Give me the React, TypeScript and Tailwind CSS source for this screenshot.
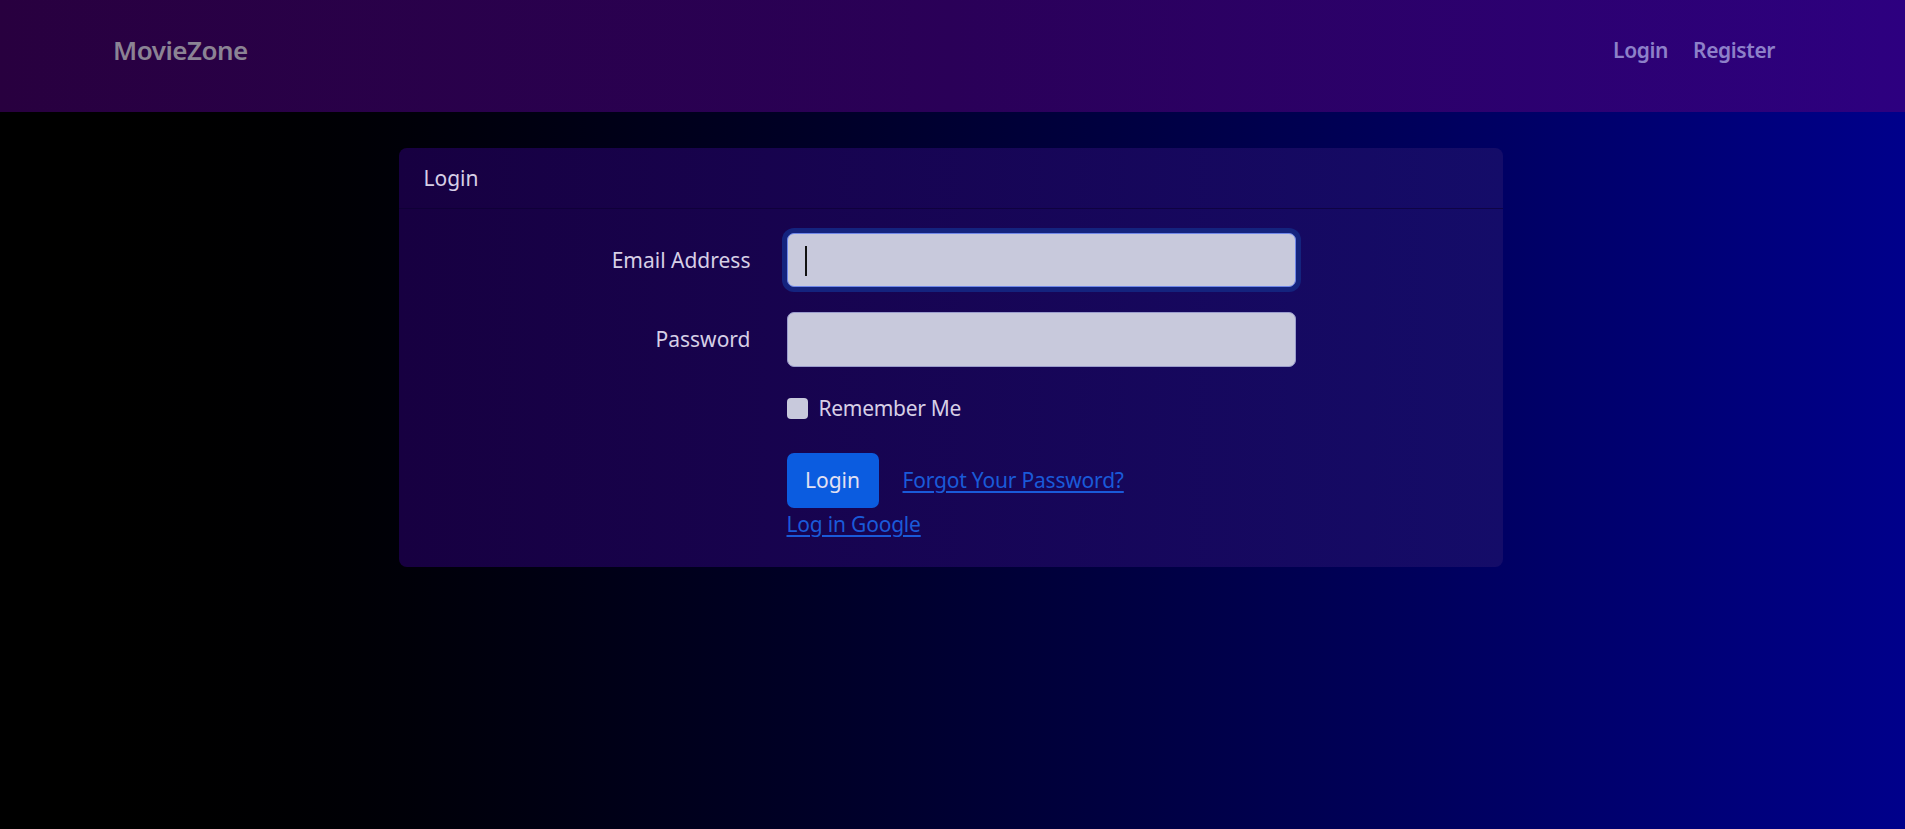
import React from "react";

export default function App() {
  return (
    <div
      className="min-h-[829px] w-full bg-gradient-to-r from-black to-[#00008b] text-[#d6cfe6]"
      style={{ fontFamily: '"Noto Sans", "Open Sans", sans-serif' }}
    >
      <nav className="flex h-[112px] items-start justify-between bg-gradient-to-r from-[#28003f] via-[#2a0058] to-[#2d0080] pl-[113px] pr-[130px]">
        <a href="#" className="mt-[37px] text-[26px] font-semibold leading-none tracking-[-0.5px] text-[#8b8394]">
          MovieZone
        </a>
        <div className="mt-[35px] flex items-center gap-[25px] text-[21px] font-semibold text-[#8d80c9]">
          <a href="#" className="tracking-[-0.4px]">Login</a>
          <a href="#" className="tracking-[-0.4px]">Register</a>
        </div>
      </nav>

      <main className="pt-[36px]">
        <div className="mx-auto w-[1104px] translate-x-[-2px] overflow-hidden rounded-[8px] bg-gradient-to-r from-[#170041] to-[#140c69]">
          <div className="border-b border-[#0c0030]/60 pl-[25px] pt-[15px] pb-[14px] text-[21px] leading-[31px]">
            Login
          </div>
          <div className="pt-[24px] pb-[27px] text-[21px] leading-[31px]">
            <div className="flex items-center">
              <label className="w-[352px] text-right">Email Address</label>
              <div className="relative ml-[36px] h-[54px] w-[509px] rounded-[7px] border border-[#6f86e8] bg-[#c8c9dc] shadow-[0_0_0_5px_#14237e]">
                <input className="h-full w-full bg-transparent px-[17px] text-[21px] outline-none" />
                <span className="absolute left-[17px] top-[12px] h-[30px] w-[2px] bg-[#111]" />
              </div>
            </div>
            <div className="mt-[25px] flex items-center">
              <label className="w-[352px] text-right">Password</label>
              <input
                type="password"
                className="ml-[36px] h-[55px] w-[509px] rounded-[7px] border border-[#9a9ccc] bg-[#c8c9dc] px-[17px] outline-none"
              />
            </div>
            <div className="ml-[388px] mt-[26px] flex h-[31px] items-center gap-[11px]">
              <span className="block h-[21px] w-[21px] rounded-[4px] bg-[#c8c9dc]" />
              <span className="tracking-[-0.3px]">Remember Me</span>
            </div>
            <div className="ml-[388px] mt-[29px] flex items-center gap-[24px]">
              <button className="h-[55px] w-[92px] rounded-[7px] bg-[#0b5ce0] text-[21px] text-[#e3e1f2]">
                Login
              </button>
              <a href="#" className="text-[#1a5ad9] underline underline-offset-[3px] tracking-[-0.2px]">
                Forgot Your Password?
              </a>
            </div>
            <div className="ml-[388px] mt-[1px]">
              <a href="#" className="text-[#1a5ad9] underline underline-offset-[3px] tracking-[-0.2px]">
                Log in Google
              </a>
            </div>
          </div>
        </div>
      </main>
    </div>
  );
}
